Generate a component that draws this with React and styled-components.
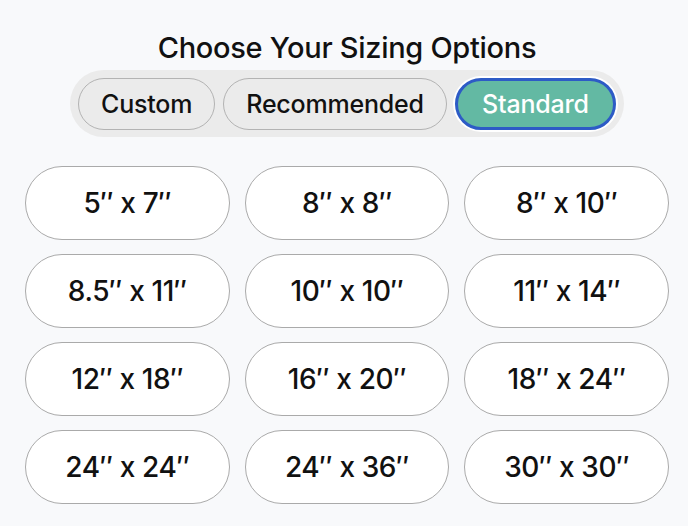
import styled, { createGlobalStyle } from "styled-components";

const GlobalStyle = createGlobalStyle`
	html, body {
		margin: 0;
		background: #f8f9fb;
	}
	body {
		font-family: Inter, "Noto Sans", sans-serif;
		color: #111;
	}
`;

const modes = ["Custom", "Recommended", "Standard"];
const sizes = [
	["5", "7"],
	["8", "8"],
	["8", "10"],
	["8.5", "11"],
	["10", "10"],
	["11", "14"],
	["12", "18"],
	["16", "20"],
	["18", "24"],
	["24", "24"],
	["24", "36"],
	["30", "30"],
];

const App = () => {
	return (
		<>
			<GlobalStyle />
			<Page>
				<Title>Choose Your Sizing Options</Title>
				<Segmented>
					{modes.map((m) => (
						<ModeButton key={m} $active={m === "Standard"}>
							{m}
						</ModeButton>
					))}
				</Segmented>
				<Grid>
					{sizes.map(([w, h]) => (
						<SizeButton key={w + "x" + h}>
							{w}″ x {h}″
						</SizeButton>
					))}
				</Grid>
			</Page>
		</>
	);
};

export default App;

const Page = styled.div`
	width: 644px;
	margin-left: 25px;
	padding-top: 30px;
	display: flex;
	flex-direction: column;
	align-items: center;
`;

const Title = styled.h1`
	margin: 0;
	font-size: 29px;
	font-weight: 500;
	line-height: 36px;
	letter-spacing: -0.3px;
`;

const Segmented = styled.div`
	margin-top: 4px;
	width: 554px;
	box-sizing: border-box;
	height: 67px;
	padding: 7px 8px;
	background: #ebebeb;
	border-radius: 34px;
	display: flex;
	align-items: center;
	gap: 8px;
`;

const ModeButton = styled.button`
	height: 52px;
	box-sizing: border-box;
	padding: 0 22px;
	border-radius: 26px;
	font-family: inherit;
	font-size: 25px;
	font-weight: 500;
	letter-spacing: -0.2px;
	border: ${(p) => (p.$active ? "3px solid #2d5bc6" : "1px solid #b3b3b3")};
	background: ${(p) => (p.$active ? "#63b9a3" : "#ebebeb")};
	color: ${(p) => (p.$active ? "#fff" : "#111")};
	box-shadow: ${(p) => (p.$active ? "0 0 0 2px #fff" : "none")};
	flex: ${(p) => (p.$active ? "1" : "none")};
`;

const Grid = styled.div`
	margin-top: 29px;
	width: 100%;
	display: grid;
	grid-template-columns: repeat(3, 1fr);
	column-gap: 15px;
	row-gap: 14px;
`;

const SizeButton = styled.button`
	height: 74px;
	border-radius: 37px;
	border: 1px solid #aaa;
	background: #fff;
	font-family: inherit;
	font-size: 28px;
	font-weight: 500;
	letter-spacing: -0.4px;
	color: #111;
`;
